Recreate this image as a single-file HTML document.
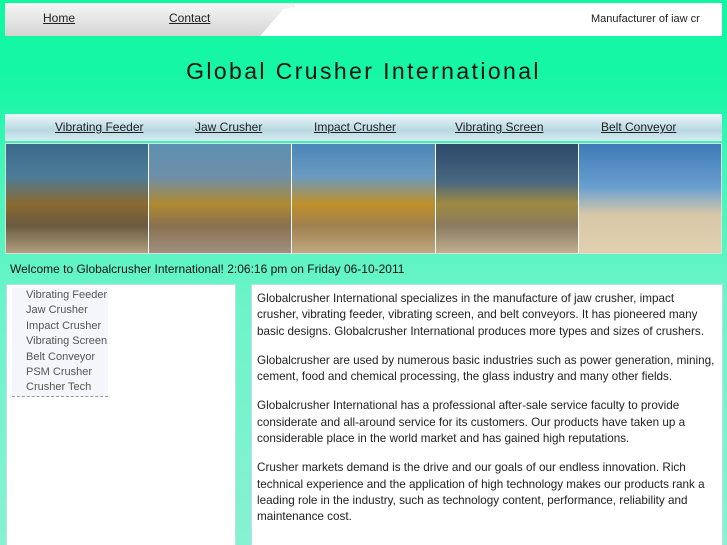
<!DOCTYPE html>
<html style="height:545px;overflow:hidden"><head><style>
body{margin:0;width:727px;height:545px;overflow:hidden;font-family:"Liberation Sans",sans-serif;background:linear-gradient(#10f7a2 0px,#18f7a6 90px,#3cf5b6 150px,#6cf4c8 300px,#86f2d2 545px);position:relative}
.top{position:absolute;left:5px;top:3px;width:717px;height:33px;background:#fff}
.topl{position:absolute;left:0;top:0;width:290px;height:33px;background:linear-gradient(#f6f6f6,#d4d4d4);clip-path:polygon(0 0,100% 0,100% 4px,96% 6px,88% 100%,0 100%)}
.top a{position:absolute;top:8px;font-size:12px;color:#222;text-decoration:underline}
h1{position:absolute;left:0;width:727px;top:58px;margin:0;text-align:center;font-weight:normal;font-size:23px;letter-spacing:2.4px;color:#111}
.nav{position:absolute;left:5px;top:114px;width:717px;height:27px;background:linear-gradient(#eef7fa,#b8d8e2 60%,#d8ecf2)}
.nav a{position:absolute;top:6px;font-size:12px;color:#222;text-decoration:underline}
.strip{position:absolute;left:5px;top:143px;width:715px;height:109px;border:1px solid #ddd;display:flex;background:#fff}
.p{flex:1;margin-right:1px}
.wel{position:absolute;left:10px;top:262px;font-size:12px;color:#111}
.lb{position:absolute;left:6px;top:284px;width:228px;height:261px;background:#fff;border:1px solid #bde;border-bottom:0}
.rb{position:absolute;left:251px;top:284px;width:470px;height:255px;background:#fff;border:1px solid #bde;border-bottom:0;overflow:hidden}
.menu{position:absolute;left:5px;top:3px;width:96px;background:#f4f6fb;border-bottom:1px dashed #99a}
.menu div{font-size:11px;color:#555;height:15.4px;padding-left:14px;line-height:15px}
.rb p{margin:0 0 13px;font-size:11.7px;line-height:16.3px;color:#222;padding:0 4px 0 5px}
</style></head><body>
<div class="top"><div class="topl"></div><a style="left:38px">Home</a><a style="left:164px">Contact</a><span style="position:absolute;left:586px;top:10px;font-size:11px;color:#222">Manufacturer of iaw cr</span></div>
<h1>Global Crusher International</h1>
<div class="nav"><a style="left:50px">Vibrating Feeder</a><a style="left:190px">Jaw Crusher</a><a style="left:309px">Impact Crusher</a><a style="left:450px">Vibrating Screen</a><a style="left:596px">Belt Conveyor</a></div>
<div class="strip">
<div class="p" style="background:linear-gradient(#3a6a8a,#4c7c98 30%,#8a6a30 55%,#6a5a40 75%,#b0a080)"></div>
<div class="p" style="background:linear-gradient(#5e90b0,#6d8faa 30%,#b08a30 55%,#8a7050 75%,#a09080)"></div>
<div class="p" style="background:linear-gradient(#4a86b8,#6a9ac0 30%,#c0902a 55%,#a08050 75%,#c0a880)"></div>
<div class="p" style="background:linear-gradient(#2c4a6a,#4a6880 35%,#a08a40 55%,#8a7a60 75%,#c0b090)"></div>
<div class="p" style="background:linear-gradient(#3e7ab8,#6aa0d0 40%,#d8c8a8 65%,#e0d0b0);margin:0"></div>
</div>
<div class="wel">Welcome to Globalcrusher International! 2:06:16 pm on Friday 06-10-2011</div>
<div class="lb"><div class="menu"><div>Vibrating Feeder</div><div>Jaw Crusher</div><div>Impact Crusher</div><div>Vibrating Screen</div><div>Belt Conveyor</div><div>PSM Crusher</div><div>Crusher Tech</div></div></div>
<div class="rb" style="padding-top:6px">
<p>Globalcrusher International specializes in the manufacture of jaw crusher, impact crusher, vibrating feeder, vibrating screen, and belt conveyors. It has pioneered many basic designs. Globalcrusher International produces more types and sizes of crushers.</p>
<p>Globalcrusher are used by numerous basic industries such as power generation, mining, cement, food and chemical processing, the glass industry and many other fields.</p>
<p>Globalcrusher International has a professional after-sale service faculty to provide considerate and all-around service for its customers. Our products have taken up a considerable place in the world market and has gained high reputations.</p>
<p>Crusher markets demand is the drive and our goals of our endless innovation. Rich technical experience and the application of high technology makes our products rank a leading role in the industry, such as technology content, performance, reliability and maintenance cost.</p>
</div>
</body></html>
